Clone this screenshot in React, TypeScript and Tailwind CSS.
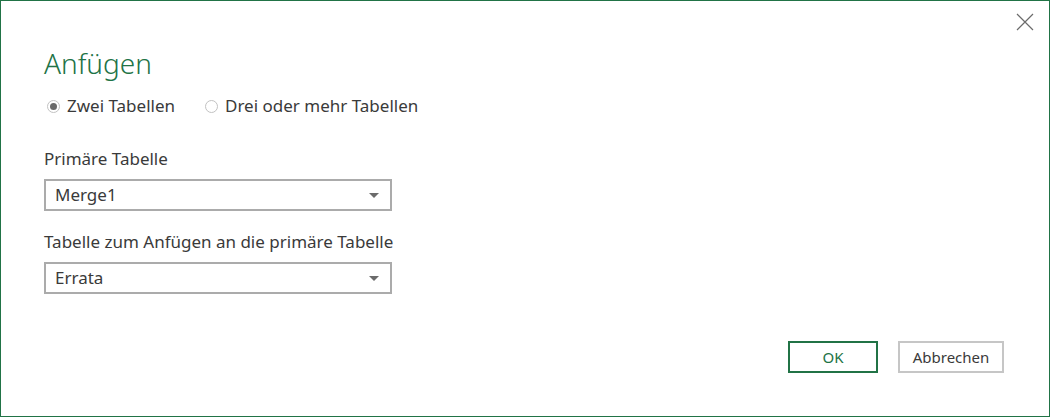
import { useState } from 'react';

const font = { fontFamily: '"Noto Sans", "Open Sans", sans-serif' };

function Radio({ checked, label, onSelect }: { checked: boolean; label: string; onSelect: () => void }) {
  return (
    <button type="button" onClick={onSelect} className="flex items-center gap-[7px] text-[17px] text-[#3a3a3a]">
      <span className="flex h-[13px] w-[13px] items-center justify-center rounded-full border border-[#c2c2c2] bg-white">
        {checked && <span className="h-[7px] w-[7px] rounded-full bg-[#6a6a6a]" />}
      </span>
      {label}
    </button>
  );
}

function Select({ value }: { value: string }) {
  return (
    <div className="flex h-[32px] w-[348px] items-center justify-between border-2 border-[#ababab] bg-white pl-[9px] pr-[9px] text-[17px] text-[#3a3a3a]">
      <span>{value}</span>
      <svg width="12" height="7" viewBox="0 0 12 7" className="mr-[1px]">
        <path d="M1 1h10L6 6z" fill="#6b6b6b" />
      </svg>
    </div>
  );
}

export default function App() {
  const [mode, setMode] = useState<'two' | 'many'>('two');

  return (
    <div style={font} className="relative h-[417px] w-[1050px] border border-[#217346] bg-white">
      <button type="button" className="absolute right-[15px] top-[12px] p-0">
        <svg width="18" height="18" viewBox="0 0 18 18">
          <path d="M1 1l16 16M17 1L1 17" stroke="#6b6b6b" strokeWidth="1.2" fill="none" />
        </svg>
      </button>

      <div className="pl-[43px] pt-[44px]">
        <h1 className="text-[28px] font-light leading-[36px] text-[#217346]">Anfügen</h1>

        <div className="mt-[13px] flex h-[24px] items-center gap-[30px] pl-[3px]">
          <Radio checked={mode === 'two'} label="Zwei Tabellen" onSelect={() => setMode('two')} />
          <Radio checked={mode === 'many'} label="Drei oder mehr Tabellen" onSelect={() => setMode('many')} />
        </div>

        <div className="mt-[29px] h-[24px] text-[17px] leading-[24px] text-[#3a3a3a]">Primäre Tabelle</div>
        <div className="mt-[8px]">
          <Select value="Merge1" />
        </div>

        <div className="mt-[19px] h-[24px] text-[17px] leading-[24px] text-[#3a3a3a]">
          Tabelle zum Anfügen an die primäre Tabelle
        </div>
        <div className="mt-[8px]">
          <Select value="Errata" />
        </div>
      </div>

      <div className="mt-[47px] flex justify-end gap-[20px] pr-[45px]">
        <button type="button" className="h-[32px] w-[90px] border-2 border-[#217346] bg-white text-[15px] text-[#217346]">
          OK
        </button>
        <button type="button" className="h-[32px] w-[106px] border-2 border-[#c6c6c6] bg-white text-[15px] text-[#3a3a3a]">
          Abbrechen
        </button>
      </div>
    </div>
  );
}
